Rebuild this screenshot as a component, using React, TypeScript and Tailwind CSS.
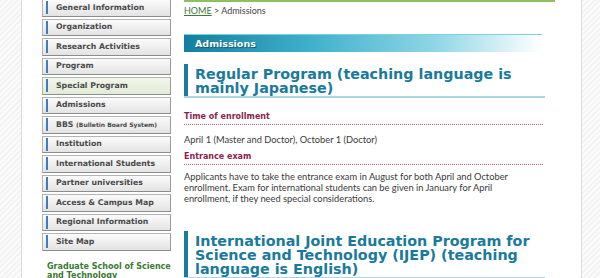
import type { ReactNode } from "react";

const navItems = [
  "General Information",
  "Organization",
  "Research Activities",
  "Program",
  "Special Program",
  "Admissions",
  "BBS",
  "Institution",
  "International Students",
  "Partner universities",
  "Access & Campus Map",
  "Regional Information",
  "Site Map",
];

const stripes =
  "bg-[repeating-linear-gradient(135deg,#f4f4f4_0px,#f4f4f4_2px,#fbfbfb_2px,#fbfbfb_4px)]";

const bodyFont = { fontFamily: '"Lato", "Open Sans", sans-serif' };

function NavButton({ label }: { label: string }) {
  const active = label === "Special Program";
  return (
    <div
      className={
        "flex h-[17.5px] mb-[2px] items-center border border-[#b4b4b4] border-b-[#8c8c8c] border-r-[#9a9a9a] " +
        (active
          ? "bg-[linear-gradient(#f1f6ea,#e2ebd6)]"
          : "bg-[linear-gradient(#fbfbfb,#e3e3e3)]")
      }
    >
      <span className="ml-[3px] h-[13px] w-[2px] bg-[#3f7cc2]" />
      <span className="ml-[8px] text-[7.75px] font-bold text-[#4a4a4a] whitespace-nowrap">
        {label === "BBS" ? (
          <>
            BBS <span className="text-[6px]">(Bulletin Board System)</span>
          </>
        ) : (
          label
        )}
      </span>
    </div>
  );
}

function Heading({ children }: { children: ReactNode }) {
  return (
    <div className="mr-[10px] flex border-b-2 border-[#a9d6e3]">
      <span className="w-[4px] shrink-0 bg-[#1b7b9d]" />
      <h2 className="pl-[7px] pt-[3px] pb-[1px] text-[14.3px] leading-[14px] font-bold text-[#1a7a9c]">
        {children}
      </h2>
    </div>
  );
}

function Label({ children }: { children: ReactNode }) {
  return (
    <div className="mr-[12px] border-b border-dotted border-[#c0668f] pb-[1px] text-[8px] font-bold text-[#8a1f4f]">
      {children}
    </div>
  );
}

export default function App() {
  return (
    <div
      className="flex h-[278px] w-[600px] overflow-hidden bg-white"
      style={{ fontFamily: '"DejaVu Sans", Verdana, sans-serif' }}
    >
      <div className={"w-[21px] shrink-0 " + stripes} />
      <div className="flex w-[561px] shrink-0 border-l border-r border-[#dcdcdc] bg-white">
        {/* 左側ナビ */}
        <div className="ml-[20px] w-[129px] shrink-0 -mt-[1px]">
          {navItems.map((item) => (
            <NavButton key={item} label={item} />
          ))}
          <div className="mt-[11px] pl-[5px] text-[8px] leading-[9px] font-bold text-[#3a7a34]">
            Graduate School of Science
            <br />
            and Technology
          </div>
        </div>

        {/* 本文 */}
        <div className="ml-[13px] w-[371px] shrink-0">
          <div className="h-[2px] bg-[#8cc063]" />
          <div className="mt-[2px] text-[9px] text-[#444]" style={bodyFont}>
            <span className="text-[#3b7b3b] underline">HOME</span> &gt; Admissions
          </div>
          <div className="mt-[16px] mr-[13px] h-[18px] bg-[linear-gradient(90deg,#137fa0_0%,#3fb0cb_35%,#8fd6e6_70%,#ffffff_100%)] border-t border-[#7fd0e2] pl-[11px] text-[9.5px] leading-[17px] font-bold text-white [text-shadow:1px_1px_1px_#0b5a72]">
            Admissions
          </div>
          <div className="mt-[12px]">
            <Heading>
              Regular Program (teaching language is
              <br />
              mainly Japanese)
            </Heading>
          </div>
          <div className="mt-[13px]">
            <Label>Time of enrollment</Label>
          </div>
          <p className="mt-[8px] text-[9.3px] text-[#3a3a3a]" style={bodyFont}>
            April 1 (Master and Doctor), October 1 (Doctor)
          </p>
          <div className="mt-[5px]">
            <Label>Entrance exam</Label>
          </div>
          <p className="mt-[6px] text-[9.3px] leading-[11px] text-[#3a3a3a]" style={bodyFont}>
            Applicants have to take the entrance exam in August for both April and October
            <br />
            enrollment. Exam for international students can be given in January for April
            <br />
            enrollment, if they need special considerations.
          </p>
          <div className="mt-[27px]">
            <Heading>
              International Joint Education Program for
              <br />
              Science and Technology (IJEP) (teaching
              <br />
              language is English)
            </Heading>
          </div>
        </div>
      </div>
      <div className={"flex-1 " + stripes} />
    </div>
  );
}
